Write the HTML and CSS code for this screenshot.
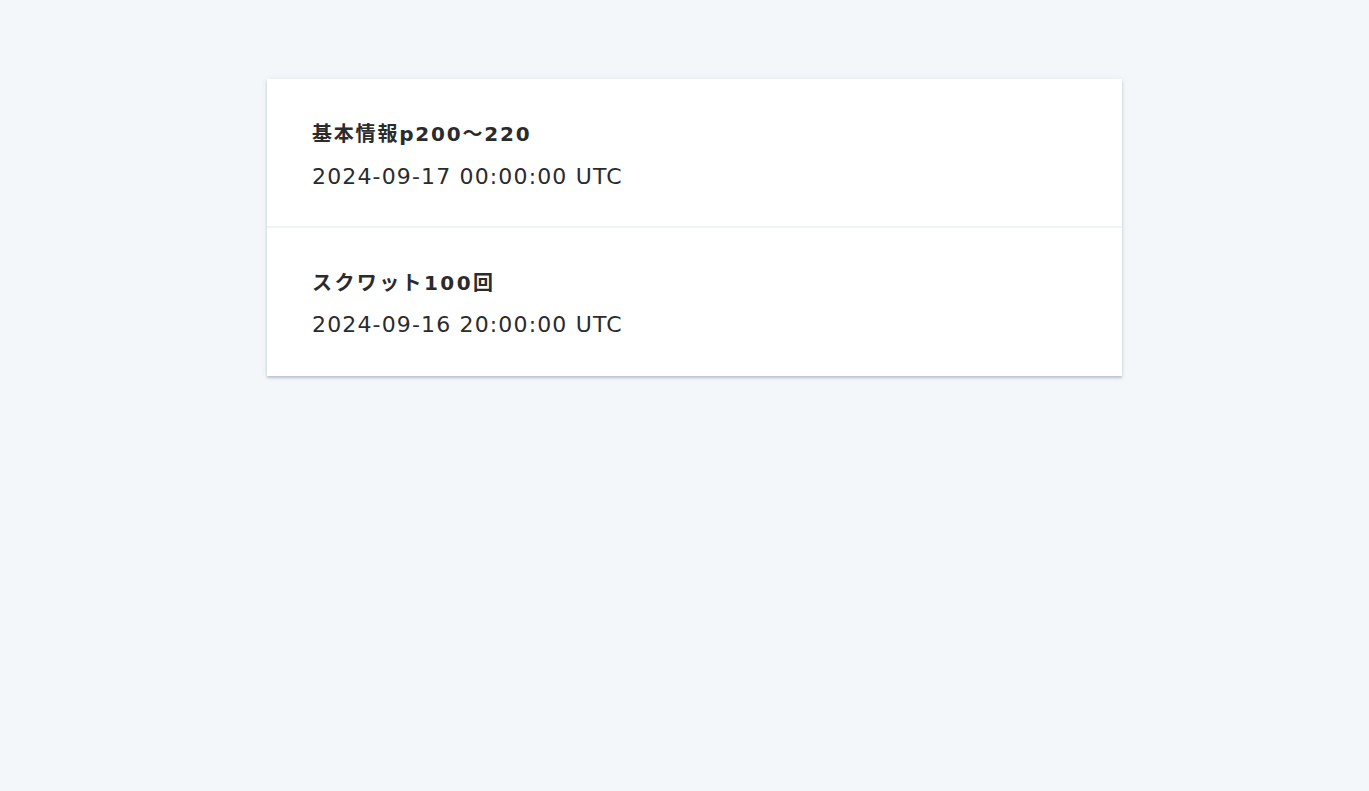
FILE: index.html
```html
<!DOCTYPE html>
<html lang="ja">
<head>
<meta charset="utf-8">
<title>Tasks</title>
<link rel="stylesheet" href="styles.css">
</head>
<body>
<main class="page">
  <ul class="list">
    <li class="item">
      <div class="title">基本情報p200〜220</div>
      <div class="date">2024-09-17 00:00:00 UTC</div>
    </li>
    <li class="item">
      <div class="title">スクワット100回</div>
      <div class="date">2024-09-16 20:00:00 UTC</div>
    </li>
  </ul>
</main>
</body>
</html>
```

FILE: styles.css
```css
html, body {
  margin: 0;
  padding: 0;
  background: #f3f7fa;
}
body {
  font-family: "DejaVu Sans", "Noto Sans CJK JP", sans-serif;
  color: #2b2b2b;
}
.page {
  padding: 79px 0 40px 267px;
}
.list {
  list-style: none;
  margin: 0;
  padding: 0;
  width: 855px;
  background: #fff;
  box-shadow: 0 2px 2px rgba(40, 60, 90, 0.22), 0 1px 6px rgba(40, 60, 90, 0.1);
}
.item {
  padding: 40px 45px 31px;
  height: 76px;
}
.item + .item {
  border-top: 2px solid #f1f4f7;
  padding-bottom: 32px;
}
.title {
  font-size: 20px;
  line-height: 30px;
  font-weight: bold;
  letter-spacing: 1.8px;
}
.item + .item .title {
  letter-spacing: 2.4px;
}
.date {
  margin-top: 11px;
  font-size: 22px;
  line-height: 33px;
  letter-spacing: 1.15px;
}
.item + .item .date {
  margin-top: 10px;
}
```
